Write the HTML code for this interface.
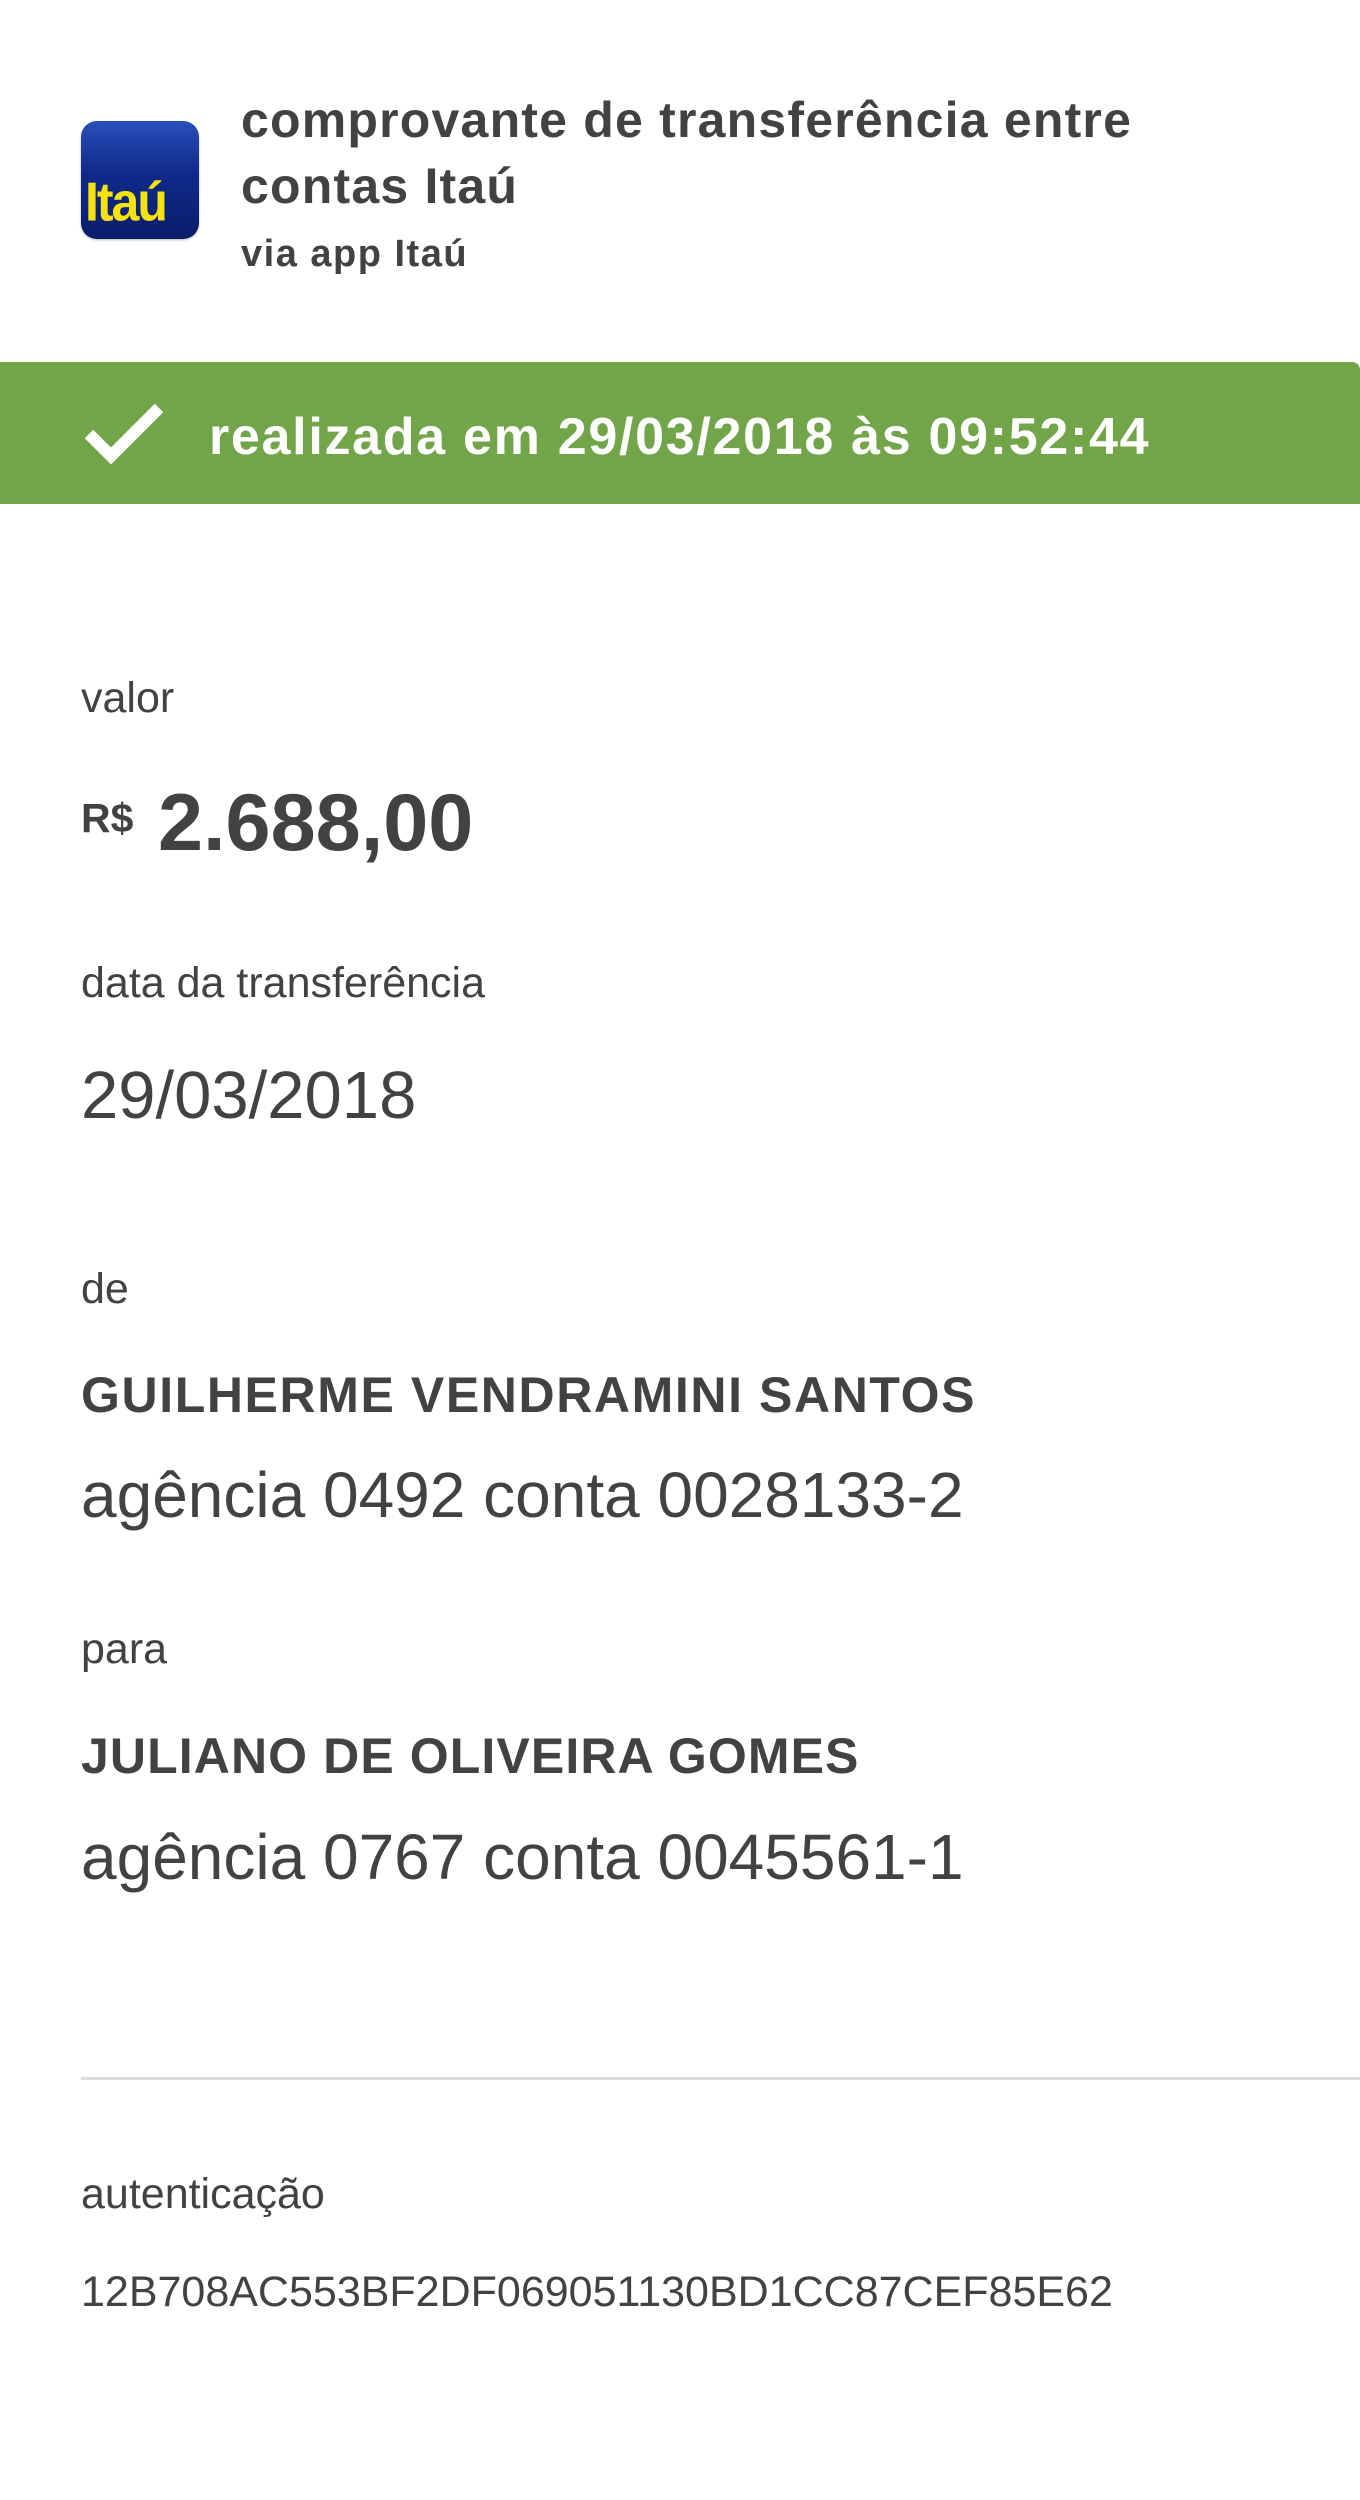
<!DOCTYPE html>
<html><head><meta charset="utf-8"><style>
*{margin:0;padding:0;box-sizing:border-box}
body{width:1360px;height:2500px;background:#fff;font-family:"Liberation Sans",sans-serif;color:#424242;position:relative;overflow:hidden}
.a{position:absolute;white-space:nowrap;line-height:1}
.logo{position:absolute;left:81px;top:121px;width:118px;height:118px;border-radius:16px;background:linear-gradient(#2a4fb8,#0f2a8a 45%,#0a1d6b);box-shadow:0 1px 2px rgba(0,0,0,.3)}
.logo span{position:absolute;left:4px;top:52px;font-weight:bold;font-size:50px;color:#f6e20f;letter-spacing:-2px;transform:scaleY(1.1)}
.bar{position:absolute;left:0;top:362px;width:1360px;height:142px;background:#72a54a;border-top-right-radius:8px}
.lbl{font-size:43px}
</style></head><body>
<div class="logo"><span>Itaú</span></div>
<div class="a" style="left:241px;top:95px;font-size:50px;font-weight:bold;letter-spacing:1.2px">comprovante de transferência entre</div>
<div class="a" style="left:241px;top:161px;font-size:50px;font-weight:bold;letter-spacing:1.2px">contas Itaú</div>
<div class="a" style="left:241px;top:235px;font-size:38px;font-weight:bold;letter-spacing:1.5px">via app Itaú</div>
<div class="bar">
<svg style="position:absolute;left:83px;top:40px" width="82" height="62" viewBox="0 0 82 62"><path d="M6 32 L28 54 L76 6" fill="none" stroke="#fff" stroke-width="12" stroke-linejoin="miter"/></svg>
<div class="a" style="left:209px;top:49px;font-size:52px;font-weight:bold;color:#fff;letter-spacing:1.7px">realizada em 29/03/2018 às 09:52:44</div>
</div>
<div class="a lbl" style="left:81px;top:677px">valor</div>
<div class="a" style="left:81px;top:798px;font-size:41px;font-weight:bold">R$</div>
<div class="a" style="left:158px;top:783px;font-size:81px;font-weight:bold">2.688,00</div>
<div class="a lbl" style="left:81px;top:962px">data da transferência</div>
<div class="a" style="left:81px;top:1062px;font-size:67px">29/03/2018</div>
<div class="a lbl" style="left:81px;top:1268px">de</div>
<div class="a" style="left:81px;top:1370px;font-size:50px;font-weight:bold;letter-spacing:1.6px">GUILHERME VENDRAMINI SANTOS</div>
<div class="a" style="left:81px;top:1463px;font-size:64px">agência 0492 conta 0028133-2</div>
<div class="a lbl" style="left:81px;top:1628px">para</div>
<div class="a" style="left:81px;top:1731px;font-size:50px;font-weight:bold;letter-spacing:1.1px">JULIANO DE OLIVEIRA GOMES</div>
<div class="a" style="left:81px;top:1825px;font-size:64px">agência 0767 conta 0045561-1</div>
<div style="position:absolute;left:81px;top:2077px;width:1279px;height:3px;background:#ddd"></div>
<div class="a lbl" style="left:81px;top:2173px">autenticação</div>
<div class="a" style="left:81px;top:2271px;font-size:43px">12B708AC553BF2DF069051130BD1CC87CEF85E62</div>
</body></html>
